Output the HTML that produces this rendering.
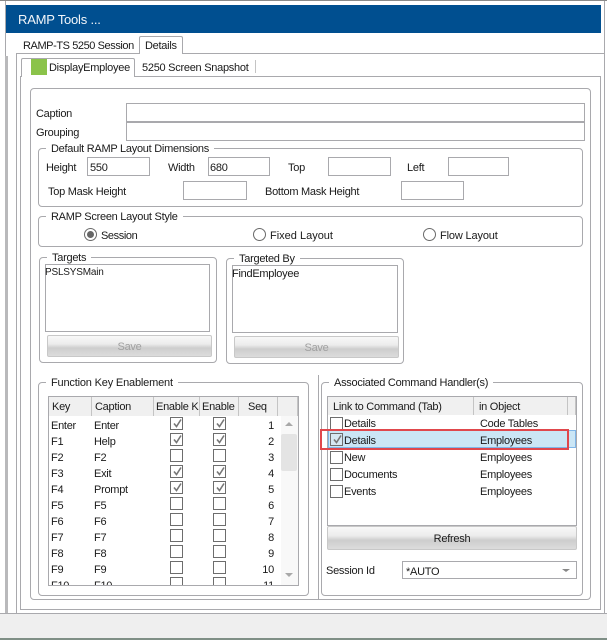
<!DOCTYPE html>
<html><head><meta charset="utf-8">
<style>
html,body{margin:0;padding:0;background:#fff}
#p{position:relative;width:607px;height:640px;overflow:hidden;background:#fff;font:11px "Liberation Sans",sans-serif;color:#1a1a1a;letter-spacing:-.27px}
#p div{position:absolute;box-sizing:border-box}
.t{white-space:nowrap;line-height:14px;height:14px;margin-top:1px}
.i{border:1px solid #a9a9ad;background:#fff;line-height:20px}
.g{border:1px solid #a9a9ad;border-radius:4px}
.l{background:#fff;white-space:nowrap;line-height:14px;height:14px;padding:0 5px;margin-top:1px}
.b{border:1px solid #c8c8c8;border-radius:2px;background:linear-gradient(#f8f8f8 0,#ececec 40%,#cdcdcd 60%,#dcdcdc 100%);text-align:center;line-height:22px}
.c{width:13px;height:13px;border:1px solid #6d6d6d;background:#fff}
.c svg{position:absolute;left:1px;top:0}
.h{background:#f0f0f0;border-right:1px solid #c4c4c4;line-height:21px;padding-left:3px;overflow:hidden;white-space:nowrap;top:0;height:19px}
.r{width:13px;height:13px;border:1px solid #6a6a6a;border-radius:50%;background:#fff}
.v{background:#a9a9ad}
</style></head><body><div id="p">
<div style="left:0;top:0;width:607px;height:1px;background:#8a8a8a"></div>
<div class="v" style="left:5px;top:1px;width:1px;height:612px"></div>
<div style="left:5px;top:56px;width:3px;height:557px;background:#b9b9bb"></div>
<div class="v" style="left:604px;top:1px;width:1px;height:637px"></div>
<div style="left:6px;top:5px;width:595px;height:28px;background:#004f90"></div>
<div class="t" style="left:18px;top:10px;height:17px;line-height:17px;font-size:13px;color:#f2f6fa;letter-spacing:-.2px">RAMP Tools ...</div>

<div class="v" style="left:16px;top:53px;width:588px;height:1px"></div>
<div class="v" style="left:16px;top:53px;width:1px;height:560px"></div>
<div class="t" style="left:23px;top:38px;letter-spacing:-.42px">RAMP-TS 5250 Session</div>
<div style="left:139px;top:36px;width:44px;height:18px;border:1px solid #a9a9ad;border-bottom:0;border-radius:2px 2px 0 0;background:#fff"></div>
<div class="t" style="left:145px;top:38px">Details</div>

<div style="left:20px;top:76px;width:581px;height:534px;border:1px solid #a9a9ad"></div>
<div style="left:21px;top:58px;width:114px;height:19px;border:1px solid #a9a9ad;border-bottom:0;border-radius:2px 2px 0 0;background:#fff"></div>
<div style="left:31px;top:59px;width:16px;height:16px;background:#8bc34a"></div>
<div class="t" style="left:49px;top:60px">DisplayEmployee</div>
<div class="t" style="left:142px;top:60px">5250 Screen Snapshot</div>
<div style="left:255px;top:60px;width:1px;height:13px;background:#c4c4c4"></div>

<div class="g" style="left:30px;top:88px;width:561px;height:512px"></div>
<div class="t" style="left:36px;top:106px">Caption</div>
<div class="i" style="left:126px;top:103px;width:459px;height:19px"></div>
<div class="t" style="left:36px;top:125px">Grouping</div>
<div class="i" style="left:126px;top:122px;width:459px;height:19px"></div>

<div class="g" style="left:38px;top:148px;width:545px;height:59px"></div>
<div class="l" style="left:46px;top:141px">Default RAMP Layout Dimensions</div>
<div class="t" style="left:46px;top:160px">Height</div>
<div class="i" style="left:87px;top:157px;width:63px;height:19px;padding-left:2px">550</div>
<div class="t" style="left:168px;top:160px">Width</div>
<div class="i" style="left:208px;top:157px;width:62px;height:19px;padding-left:1px">680</div>
<div class="t" style="left:288px;top:160px">Top</div>
<div class="i" style="left:328px;top:157px;width:63px;height:19px"></div>
<div class="t" style="left:407px;top:160px">Left</div>
<div class="i" style="left:448px;top:157px;width:61px;height:19px"></div>
<div class="t" style="left:48px;top:184px">Top Mask Height</div>
<div class="i" style="left:183px;top:181px;width:64px;height:19px"></div>
<div class="t" style="left:265px;top:184px">Bottom Mask Height</div>
<div class="i" style="left:401px;top:181px;width:63px;height:19px"></div>

<div class="g" style="left:38px;top:216px;width:545px;height:31px"></div>
<div class="l" style="left:46px;top:209px">RAMP Screen Layout Style</div>
<div class="r" style="left:84px;top:228px"></div>
<div style="left:87px;top:231px;width:7px;height:7px;border-radius:50%;background:#666"></div>
<div class="t" style="left:101px;top:228px;letter-spacing:-.4px">Session</div>
<div class="r" style="left:253px;top:228px"></div>
<div class="t" style="left:270px;top:228px;letter-spacing:0">Fixed Layout</div>
<div class="r" style="left:423px;top:228px"></div>
<div class="t" style="left:440px;top:228px;letter-spacing:-.15px">Flow Layout</div>

<div class="g" style="left:39px;top:257px;width:178px;height:106px"></div>
<div class="l" style="left:47px;top:250px">Targets</div>
<div class="i" style="left:45px;top:264px;width:165px;height:68px;text-indent:-1px;line-height:16px;font-size:10px;letter-spacing:-.2px">PSLSYSMain</div>
<div class="b" style="left:47px;top:335px;width:165px;height:22px;color:#a0a0a0">Save</div>

<div class="g" style="left:226px;top:258px;width:178px;height:106px"></div>
<div class="l" style="left:234px;top:251px">Targeted By</div>
<div class="i" style="left:232px;top:265px;width:166px;height:68px;text-indent:-1px;line-height:16px">FindEmployee</div>
<div class="b" style="left:234px;top:336px;width:165px;height:22px;color:#a0a0a0">Save</div>

<div class="g" style="left:38px;top:382px;width:271px;height:214px"></div>
<div class="l" style="left:46px;top:375px;letter-spacing:-.18px">Function Key Enablement</div>
<div class="i" style="left:48px;top:396px;width:251px;height:190px;overflow:hidden">
  <div class="h" style="left:0;width:43px">Key</div>
  <div class="h" style="left:43px;width:62px">Caption</div>
  <div class="h" style="left:105px;width:46px;padding-left:2px">Enable Key</div>
  <div class="h" style="left:151px;width:39px;padding-left:2px">Enable F</div>
  <div class="h" style="left:190px;width:39px;padding-left:9px">Seq</div>
  <div class="h" style="left:229px;width:20px"></div>
  <div style="left:232px;top:19px;width:17px;height:169px;background:#f8f8f8"></div>
  <div style="left:232px;top:37px;width:16px;height:37px;background:#e4e4e4;border-radius:2px"></div>
  <div style="left:236px;top:25px;width:0;height:0;border:4px solid transparent;border-top:0;border-bottom:4px solid #a8a8a8"></div>
  <div style="left:236px;top:176px;width:0;height:0;border:4px solid transparent;border-bottom:0;border-top:4px solid #a8a8a8"></div>
</div>

<div class="t" style="left:51px;top:418px">Enter</div><div class="t" style="left:94px;top:418px">Enter</div><div class="t" style="left:249px;top:418px;width:25px;text-align:right">1</div>
<div class="t" style="left:51px;top:434px">F1</div><div class="t" style="left:94px;top:434px">Help</div><div class="t" style="left:249px;top:434px;width:25px;text-align:right">2</div>
<div class="t" style="left:51px;top:450px">F2</div><div class="t" style="left:94px;top:450px">F2</div><div class="t" style="left:249px;top:450px;width:25px;text-align:right">3</div>
<div class="t" style="left:51px;top:466px">F3</div><div class="t" style="left:94px;top:466px">Exit</div><div class="t" style="left:249px;top:466px;width:25px;text-align:right">4</div>
<div class="t" style="left:51px;top:482px">F4</div><div class="t" style="left:94px;top:482px">Prompt</div><div class="t" style="left:249px;top:482px;width:25px;text-align:right">5</div>
<div class="t" style="left:51px;top:498px">F5</div><div class="t" style="left:94px;top:498px">F5</div><div class="t" style="left:249px;top:498px;width:25px;text-align:right">6</div>
<div class="t" style="left:51px;top:514px">F6</div><div class="t" style="left:94px;top:514px">F6</div><div class="t" style="left:249px;top:514px;width:25px;text-align:right">7</div>
<div class="t" style="left:51px;top:530px">F7</div><div class="t" style="left:94px;top:530px">F7</div><div class="t" style="left:249px;top:530px;width:25px;text-align:right">8</div>
<div class="t" style="left:51px;top:546px">F8</div><div class="t" style="left:94px;top:546px">F8</div><div class="t" style="left:249px;top:546px;width:25px;text-align:right">9</div>
<div class="t" style="left:51px;top:562px">F9</div><div class="t" style="left:94px;top:562px">F9</div><div class="t" style="left:249px;top:562px;width:25px;text-align:right">10</div>
<div style="left:49px;top:575px;width:232px;height:10px;overflow:hidden">
  <div class="t" style="left:2px;top:3px">F10</div><div class="t" style="left:45px;top:3px">F10</div><div class="t" style="left:200px;top:3px;width:25px;text-align:right">11</div>
</div>

<div class="c" style="left:170px;top:417px"><svg width="11" height="11"><path d="M2 5.5L4.5 8.5L9 1.5" fill="none" stroke="#777" stroke-width="1.6"/></svg></div>
<div class="c" style="left:213px;top:417px"><svg width="11" height="11"><path d="M2 5.5L4.5 8.5L9 1.5" fill="none" stroke="#777" stroke-width="1.6"/></svg></div>
<div class="c" style="left:170px;top:433px"><svg width="11" height="11"><path d="M2 5.5L4.5 8.5L9 1.5" fill="none" stroke="#777" stroke-width="1.6"/></svg></div>
<div class="c" style="left:213px;top:433px"><svg width="11" height="11"><path d="M2 5.5L4.5 8.5L9 1.5" fill="none" stroke="#777" stroke-width="1.6"/></svg></div>
<div class="c" style="left:170px;top:449px"></div><div class="c" style="left:213px;top:449px"></div>
<div class="c" style="left:170px;top:465px"><svg width="11" height="11"><path d="M2 5.5L4.5 8.5L9 1.5" fill="none" stroke="#777" stroke-width="1.6"/></svg></div>
<div class="c" style="left:213px;top:465px"><svg width="11" height="11"><path d="M2 5.5L4.5 8.5L9 1.5" fill="none" stroke="#777" stroke-width="1.6"/></svg></div>
<div class="c" style="left:170px;top:481px"><svg width="11" height="11"><path d="M2 5.5L4.5 8.5L9 1.5" fill="none" stroke="#777" stroke-width="1.6"/></svg></div>
<div class="c" style="left:213px;top:481px"><svg width="11" height="11"><path d="M2 5.5L4.5 8.5L9 1.5" fill="none" stroke="#777" stroke-width="1.6"/></svg></div>
<div class="c" style="left:170px;top:497px"></div><div class="c" style="left:213px;top:497px"></div>
<div class="c" style="left:170px;top:513px"></div><div class="c" style="left:213px;top:513px"></div>
<div class="c" style="left:170px;top:529px"></div><div class="c" style="left:213px;top:529px"></div>
<div class="c" style="left:170px;top:545px"></div><div class="c" style="left:213px;top:545px"></div>
<div class="c" style="left:170px;top:561px"></div><div class="c" style="left:213px;top:561px"></div>
<div style="left:170px;top:577px;width:13px;height:8px;border:1px solid #6d6d6d;border-bottom:0"></div>
<div style="left:213px;top:577px;width:13px;height:8px;border:1px solid #6d6d6d;border-bottom:0"></div>

<div class="v" style="left:318px;top:375px;width:1px;height:224px"></div>
<div class="g" style="left:321px;top:382px;width:262px;height:214px"></div>
<div class="l" style="left:329px;top:375px">Associated Command Handler(s)</div>
<div class="i" style="left:327px;top:396px;width:250px;height:130px;overflow:hidden">
  <div class="h" style="left:0;width:146px;height:18px;line-height:20px;padding-left:5px">Link to Command (Tab)</div>
  <div class="h" style="left:146px;width:94px;height:18px;line-height:20px;padding-left:5px">in Object</div>
  <div class="h" style="left:240px;width:8px;height:18px"></div>
</div>
<div style="left:328px;top:430px;width:248px;height:18px;background:#cbe6f5;border:1px solid #80b6e8"></div>
<div class="c" style="left:330px;top:417px"></div><div class="t" style="left:344px;top:416px">Details</div><div class="t" style="left:480px;top:416px">Code Tables</div>
<div class="c" style="left:330px;top:433px;background:#d6e8f2"><svg width="11" height="11"><path d="M2 5.5L4.5 8.5L9 1.5" fill="none" stroke="#777" stroke-width="1.6"/></svg></div><div class="t" style="left:344px;top:433px">Details</div><div class="t" style="left:480px;top:433px">Employees</div>
<div class="c" style="left:330px;top:451px"></div><div class="t" style="left:344px;top:450px">New</div><div class="t" style="left:480px;top:450px">Employees</div>
<div class="c" style="left:330px;top:468px"></div><div class="t" style="left:344px;top:467px">Documents</div><div class="t" style="left:480px;top:467px">Employees</div>
<div class="c" style="left:330px;top:485px"></div><div class="t" style="left:344px;top:484px">Events</div><div class="t" style="left:480px;top:484px">Employees</div>
<div style="left:320px;top:429px;width:249px;height:21px;border:2px solid #e0474c"></div>
<div class="b" style="left:327px;top:526px;width:250px;height:24px;line-height:24px">Refresh</div>
<div class="t" style="left:326px;top:563px">Session Id</div>
<div class="i" style="left:402px;top:561px;width:175px;height:18px;padding-left:3px">*AUTO</div>
<div style="left:562px;top:569px;width:0;height:0;border:3px solid transparent;border-bottom:0;border-top:3px solid #888;border-left-width:4px;border-right-width:4px"></div>

<div style="left:0;top:613px;width:607px;height:25px;background:#efefef;border-top:1px solid #a9a9ad"></div>
<div style="left:0;top:638px;width:607px;height:2px;background:#7f8f86"></div>
</div></body></html>
